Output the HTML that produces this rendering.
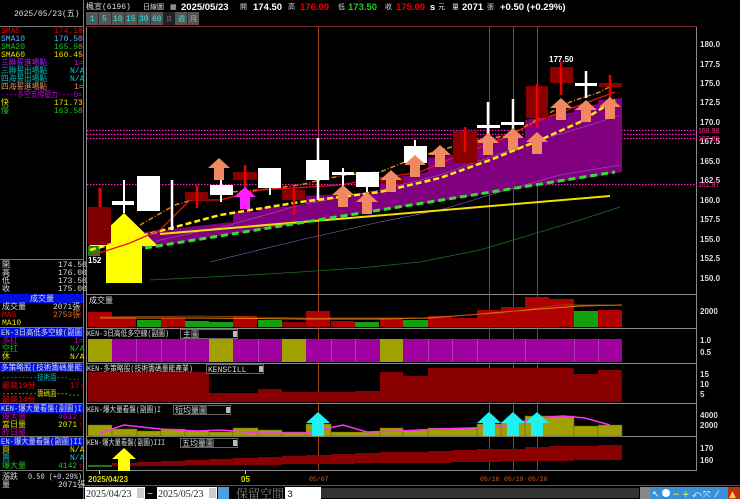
<!DOCTYPE html>
<html><head><meta charset="utf-8"><style>
html,body{margin:0;padding:0;background:#000;width:740px;height:499px;overflow:hidden}
svg{display:block}
</style></head><body>
<svg width="740" height="499" viewBox="0 0 740 499" xmlns="http://www.w3.org/2000/svg" font-family="Liberation Mono, WenQuanYi Zen Hei, monospace" font-size="8">
<rect width="740" height="499" fill="#000"/>
<!-- left panel -->
<line x1="83.5" y1="0" x2="83.5" y2="499" stroke="#777"/>
<line x1="0" y1="26.5" x2="83" y2="26.5" stroke="#777"/>
<text x="14" y="16" fill="#ddd" font-size="8">2025/05/23(五)</text>
<g font-size="8">
<text x="1" y="33" fill="#e00000">SMA5</text><text x="54" y="33" fill="#e00000">174.10</text><text x="78" y="33" fill="#e00">↑</text>
<text x="1" y="41" fill="#60b0ff">SMA10</text><text x="54" y="41" fill="#60b0ff">170.50</text><text x="78" y="41" fill="#e00">↑</text>
<text x="1" y="49" fill="#20c020">SMA20</text><text x="54" y="49" fill="#20c020">165.98</text><text x="78" y="49" fill="#e00">↑</text>
<text x="1" y="57" fill="#e0e000">SMA60</text><text x="54" y="57" fill="#e0e000">160.45</text><text x="78" y="57" fill="#e00">↑</text>
<text x="1" y="65" fill="#a020f0" textLength="46" lengthAdjust="spacingAndGlyphs">三聯誓進場點</text><text x="74" y="65" fill="#c0c">1=</text>
<text x="1" y="73" fill="#00c0c0" textLength="46" lengthAdjust="spacingAndGlyphs">三聯誓出場點</text><text x="70" y="73" fill="#0cc">N/A</text>
<text x="1" y="81" fill="#00c0c0" textLength="46" lengthAdjust="spacingAndGlyphs">四海誓出場點</text><text x="70" y="81" fill="#0cc">N/A</text>
<text x="1" y="89" fill="#e09060" textLength="46" lengthAdjust="spacingAndGlyphs">四海誓進場點</text><text x="74" y="89" fill="#e09060">1=</text>
<text x="1" y="97" fill="#c000e0" textLength="81" lengthAdjust="spacingAndGlyphs">----多空支撐壓力----0=</text>
<text x="1" y="105" fill="#e0e000">快</text><text x="54" y="105" fill="#e0e000">171.73</text><text x="78" y="105" fill="#e00">↑</text>
<text x="1" y="113" fill="#20c020">慢</text><text x="54" y="113" fill="#20c020">163.58</text><text x="78" y="113" fill="#e00">↑</text>
</g>
<line x1="0" y1="259.5" x2="83" y2="259.5" stroke="#777"/>
<g fill="#ddd">
<text x="2" y="267">開</text><text x="58" y="267">174.50</text>
<text x="2" y="275">高</text><text x="58" y="275">176.00</text>
<text x="2" y="283">低</text><text x="58" y="283">173.50</text>
<text x="2" y="291">收</text><text x="58" y="291">175.00</text>
</g>
<rect x="0" y="294" width="83" height="9" fill="#0010e0"/><text x="30" y="301" fill="#ddd">成交量</text>
<text x="2" y="309" fill="#ddd">成交量</text><text x="53" y="309" fill="#ddd">2071張</text><text x="78" y="309" fill="#e00">↑</text>
<text x="2" y="317" fill="#e00">MA5</text><text x="53" y="317" fill="#e07020">2753張</text><text x="78" y="317" fill="#e00">↑</text>
<text x="2" y="325" fill="#e0e000">MA10</text>
<line x1="0" y1="327.5" x2="83" y2="327.5" stroke="#777"/>
<rect x="0" y="328" width="83" height="9" fill="#0010e0"/><text x="1" y="335" fill="#ddd" textLength="81" lengthAdjust="spacingAndGlyphs">EN-3日高低多空線(副圖</text>
<text x="2" y="343" fill="#c000c0">多扛</text><text x="74" y="343" fill="#c0c">1=</text>
<text x="2" y="351" fill="#20c020">空扛</text><text x="70" y="351" fill="#20c020">N/A</text>
<text x="2" y="359" fill="#e0e000">休</text><text x="70" y="359" fill="#e0e000">N/A</text>
<line x1="0" y1="362.5" x2="83" y2="362.5" stroke="#777"/>
<rect x="0" y="363" width="83" height="9" fill="#0010e0"/><text x="1" y="370" fill="#ddd" textLength="81" lengthAdjust="spacingAndGlyphs">多策略股(技術籌碼量能</text>
<text x="2" y="380" fill="#00c0c0" textLength="78" lengthAdjust="spacingAndGlyphs">---------技術面---...</text>
<text x="2" y="388" fill="#e00">最高19分</text><text x="70" y="388" fill="#e00">17↑</text>
<text x="2" y="396" fill="#e0e000" textLength="78" lengthAdjust="spacingAndGlyphs">---------籌碼面---...</text>
<text x="2" y="402" fill="#e00">最高14分</text>
<line x1="0" y1="403.5" x2="83" y2="403.5" stroke="#777"/>
<rect x="0" y="404" width="83" height="9" fill="#0010e0"/><text x="1" y="411" fill="#ddd" textLength="81" lengthAdjust="spacingAndGlyphs">KEN-爆大量看盤(副圖)I</text>
<text x="2" y="419" fill="#c000c0">爆大量</text><text x="58" y="419" fill="#c000c0">4612</text><text x="78" y="419" fill="#e00">↑</text>
<text x="2" y="427" fill="#e0e000">當日量</text><text x="58" y="427" fill="#e0e000">2071</text><text x="78" y="427" fill="#e00">↑</text>
<text x="2" y="435" fill="#c000c0">昨日量</text>
<line x1="0" y1="436.5" x2="83" y2="436.5" stroke="#777"/>
<rect x="0" y="437" width="83" height="9" fill="#0010e0"/><text x="1" y="444" fill="#ddd" textLength="81" lengthAdjust="spacingAndGlyphs">EN-爆大量看盤(副圖)II</text>
<text x="2" y="452" fill="#e0e000">買</text><text x="70" y="452" fill="#e0e000">N/A</text>
<text x="2" y="460" fill="#00c0c0">賣</text><text x="70" y="460" fill="#0cc">N/A</text>
<text x="2" y="468" fill="#20c020">爆大量</text><text x="58" y="468" fill="#20c020">4142</text><text x="78" y="468" fill="#e00">↑</text>
<line x1="0" y1="470.5" x2="83" y2="470.5" stroke="#777"/>
<text x="2" y="479" fill="#ddd">漲跌</text><text x="28" y="479" fill="#ddd" textLength="54" lengthAdjust="spacingAndGlyphs">0.50 (+0.29%)</text>
<text x="2" y="487" fill="#ddd">量</text><text x="58" y="487" fill="#ddd">2071張</text>

<!-- header -->
<g font-family="Liberation Sans, WenQuanYi Zen Hei, sans-serif" font-size="9.5">
<text x="86" y="9" fill="#ddd" font-family="Liberation Mono, WenQuanYi Zen Hei, monospace" font-size="8">楓宣(6196)</text>
<text x="143" y="9" fill="#ddd" font-size="7">日線圖</text>
<text x="170" y="9" fill="#ddd" font-size="7">▦</text>
<text x="181" y="10" fill="#fff" font-weight="bold">2025/05/23</text>
<text x="240" y="9" fill="#ddd" font-size="7">開</text>
<text x="253" y="10" fill="#fff" font-weight="bold">174.50</text>
<text x="288" y="9" fill="#ddd" font-size="7">高</text>
<text x="300" y="10" fill="#e00" font-weight="bold">176.00</text>
<text x="338" y="9" fill="#ddd" font-size="7">低</text>
<text x="348" y="10" fill="#2c2" font-weight="bold">173.50</text>
<text x="385" y="9" fill="#ddd" font-size="7">收</text>
<text x="396" y="10" fill="#e00" font-weight="bold">175.00</text>
<text x="430" y="10" fill="#fff" font-weight="bold">s</text>
<text x="438" y="9" fill="#ddd" font-size="7">元</text>
<text x="452" y="9" fill="#ddd" font-size="7">量</text>
<text x="462" y="10" fill="#fff" font-weight="bold">2071</text>
<text x="487" y="9" fill="#ddd" font-size="7">張</text>
<text x="500" y="10" fill="#fff" font-weight="bold">+0.50 (+0.29%)</text>
</g>
<g font-size="8">
<rect x="86" y="12" width="113" height="13" fill="#555"/>
<rect x="163" y="12" width="12" height="13" fill="#222"/>
<g stroke="#333"><line x1="98.5" y1="12" x2="98.5" y2="25"/><line x1="111.5" y1="12" x2="111.5" y2="25"/><line x1="124.5" y1="12" x2="124.5" y2="25"/><line x1="137.5" y1="12" x2="137.5" y2="25"/><line x1="150.5" y1="12" x2="150.5" y2="25"/><line x1="187.5" y1="12" x2="187.5" y2="25"/></g>
<text x="90" y="21" fill="#2ee">1</text><text x="102" y="21" fill="#2ee">5</text><text x="113" y="21" fill="#2ee">10</text><text x="126" y="21" fill="#2ee">15</text><text x="139" y="21" fill="#2ee">30</text><text x="152" y="21" fill="#2ee">60</text>
<text x="166" y="21" fill="#777" font-size="6">日</text><text x="178" y="21" fill="#2ee" font-size="7">週</text><text x="190" y="21" fill="#2ee" font-size="7">月</text>
</g>

<!-- chart frame -->
<rect x="86.5" y="26.5" width="610" height="444" fill="none" stroke="#888"/>
<g stroke="#888"><line x1="86" y1="294.5" x2="697" y2="294.5"/><line x1="86" y1="328.5" x2="697" y2="328.5"/><line x1="86" y1="363.5" x2="697" y2="363.5"/><line x1="86" y1="403.5" x2="697" y2="403.5"/><line x1="86" y1="436.5" x2="697" y2="436.5"/></g>
<line x1="86" y1="26.5" x2="697" y2="26.5" stroke="#7a3030"/>

<!-- vertical date lines -->
<g stroke="#c05020" stroke-width="1" opacity="0.8"><line x1="318.5" y1="27" x2="318.5" y2="470"/><line x1="489.5" y1="27" x2="489.5" y2="470"/><line x1="513.5" y1="27" x2="513.5" y2="470"/><line x1="537.5" y1="27" x2="537.5" y2="470"/></g>

<!-- price axis -->
<g fill="#ddd" font-family="Liberation Sans, sans-serif" font-size="8" font-weight="bold">
<text x="700" y="47">180.0</text><text x="700" y="67">177.5</text><text x="700" y="86">175.0</text><text x="700" y="105">172.5</text><text x="700" y="125">170.0</text><text x="700" y="144">167.5</text><text x="700" y="164">165.0</text><text x="700" y="183">162.5</text><text x="700" y="203">160.0</text><text x="700" y="222">157.5</text><text x="700" y="242">155.0</text><text x="700" y="261">152.5</text><text x="700" y="281">150.0</text>
<text x="700" y="314">2000</text><text x="700" y="343">1.0</text><text x="700" y="355">0.5</text>
<text x="700" y="377">15</text><text x="700" y="387">10</text><text x="700" y="397">5</text>
<text x="700" y="418">4000</text><text x="700" y="428">2000</text>
<text x="700" y="451">170</text><text x="700" y="463">160</text>
</g>

<!-- pink dotted lines -->
<g stroke="#ff20c0" stroke-width="1.3" stroke-dasharray="1.5 1.5"><line x1="87" y1="130.5" x2="697" y2="130.5"/><line x1="87" y1="134.5" x2="697" y2="134.5"/><line x1="87" y1="138.5" x2="697" y2="138.5"/><line x1="87" y1="184.5" x2="697" y2="184.5"/></g>
<g fill="#ff3090" font-size="7" font-family="Liberation Sans, sans-serif"><text x="698" y="133">168.98</text><text x="698" y="141">167.89</text><text x="698" y="187">161.97</text></g>

<!-- purple area -->
<path d="M145,248 L145,232 L233,222 L233,212 L258,212 L258,208 L306,205 L306,196 L380,192 L380,180 L428,172 L428,158 L477,152 L477,140 L525,138 L525,120 L574,112 L574,108 L598,104 L598,100 L622,98 L622,172 L598,176 L145,248 Z" fill="#800080"/>
<g stroke="#a060c0" stroke-width="0.6" fill="none">
<polyline points="107,262 160,240 230,225 300,205 380,190 440,175 490,157 540,140 590,125 620,115"/>
<polyline points="210,262 300,240 380,222 440,210 500,192 560,175 620,165"/>
</g>
<polyline points="150,280 250,275 300,272 360,268 420,262 480,250 530,235 580,220 620,207" stroke="#1a7020" stroke-width="0.8" fill="none"/>
<!-- big yellow arrow -->
<path d="M124,213 L158,246 L142,246 L142,283 L106,283 L106,246 L89,246 Z" fill="#ffff00"/>
<rect x="88" y="207" width="23" height="38" fill="#800000"/>
<rect x="88" y="246" width="12" height="10" fill="#208020"/>
<text x="88" y="263" fill="#fff" font-size="8" font-family="Liberation Sans, sans-serif" font-weight="bold">152</text>
<line x1="100" y1="188" x2="100" y2="207" stroke="#e00" stroke-width="3"/>
<!-- lines -->
<line x1="160" y1="234" x2="610" y2="196" stroke="#f0e000" stroke-width="2"/>
<line x1="145" y1="248" x2="615" y2="172" stroke="#30e030" stroke-width="3" stroke-dasharray="7 4"/>
<polyline points="90,250 145,235 220,215 300,202 380,192 440,178 490,160 540,140 580,122 615,100" stroke="#ffee00" stroke-width="2.5" fill="none" stroke-dasharray="6 3"/>
<polyline points="140,225 175,205 215,193 260,190 300,185 320,180 345,175 380,172 410,160 440,150 480,140 510,135 540,118 570,102 600,92 615,84" stroke="#f08000" stroke-width="1.5" fill="none" stroke-dasharray="5 2 1 2"/>
<polyline points="93,255 130,243 160,230 190,200 220,200 260,190 310,187 340,185 380,178 420,172 460,155 500,140 540,120 580,105 615,92" stroke="#f01010" stroke-width="1.3" fill="none"/>

<!-- candles -->
<g>
<g fill="#fff" stroke="#fff">
<rect x="112" y="201" width="22" height="4" stroke="none"/><line x1="124" y1="180" x2="124" y2="213" stroke-width="2"/>
<rect x="137" y="176" width="23" height="35" stroke="none"/>
<line x1="172" y1="180" x2="172" y2="230" stroke-width="2.5"/>
<rect x="210" y="185" width="23" height="10" stroke="none"/><line x1="221" y1="180" x2="221" y2="202" stroke-width="2"/>
<rect x="258" y="168" width="23" height="20" stroke="none"/><line x1="270" y1="188" x2="270" y2="195" stroke-width="2"/>
<rect x="306" y="160" width="23" height="20" stroke="none"/><line x1="318" y1="138" x2="318" y2="200" stroke-width="2.5"/>
<rect x="332" y="172" width="22" height="3" stroke="none"/><line x1="343" y1="168" x2="343" y2="188" stroke-width="2"/>
<rect x="356" y="172" width="23" height="15" stroke="none"/><line x1="367" y1="187" x2="367" y2="192" stroke-width="2"/>
<rect x="404" y="146" width="23" height="17" stroke="none"/><line x1="415" y1="140" x2="415" y2="168" stroke-width="2"/>
<rect x="477" y="125" width="23" height="3" stroke="none"/><line x1="488" y1="102" x2="488" y2="136" stroke-width="2.5"/>
<rect x="501" y="122" width="23" height="3" stroke="none"/><line x1="513" y1="99" x2="513" y2="137" stroke-width="2.5"/>
<rect x="575" y="83" width="22" height="3" stroke="none"/><line x1="586" y1="71" x2="586" y2="98" stroke-width="2.5"/>
</g>
<g fill="#8a0000">
<rect x="185" y="192" width="23" height="8"/><rect x="233" y="172" width="24" height="8"/><rect x="282" y="190" width="23" height="10"/>
<rect x="380" y="178" width="23" height="6"/><rect x="453" y="131" width="24" height="32"/><rect x="526" y="86" width="22" height="32"/><rect x="550" y="67" width="23" height="16"/><rect x="599" y="83" width="23" height="4"/>
</g>
<g stroke="#e00" stroke-width="2.5">
<line x1="197" y1="185" x2="197" y2="208"/><line x1="245" y1="165" x2="245" y2="190"/><line x1="294" y1="186" x2="294" y2="215"/><line x1="465" y1="127" x2="465" y2="152"/><line x1="537" y1="84" x2="537" y2="128"/><line x1="561" y1="62" x2="561" y2="95"/><line x1="610" y1="75" x2="610" y2="100"/><line x1="391" y1="173" x2="391" y2="190"/>
</g>
<text x="549" y="62" fill="#fff" font-size="8" font-family="Liberation Sans, sans-serif" font-weight="bold">177.50</text>
</g>
<!-- salmon arrows -->
<g fill="#f08860">
<path d="M0,0 L11,10 L5,10 L5,22 L-5,22 L-5,10 L-11,10 Z" transform="translate(343,185)"/>
<path d="M0,0 L11,10 L5,10 L5,22 L-5,22 L-5,10 L-11,10 Z" transform="translate(219,158)"/>
<path d="M0,0 L11,10 L5,10 L5,22 L-5,22 L-5,10 L-11,10 Z" transform="translate(391,170)"/>
<path d="M0,0 L11,10 L5,10 L5,22 L-5,22 L-5,10 L-11,10 Z" transform="translate(415,155)"/>
<path d="M0,0 L11,10 L5,10 L5,22 L-5,22 L-5,10 L-11,10 Z" transform="translate(440,145)"/>
<path d="M0,0 L11,10 L5,10 L5,22 L-5,22 L-5,10 L-11,10 Z" transform="translate(488,133)"/>
<path d="M0,0 L11,10 L5,10 L5,22 L-5,22 L-5,10 L-11,10 Z" transform="translate(513,128)"/>
<path d="M0,0 L11,10 L5,10 L5,22 L-5,22 L-5,10 L-11,10 Z" transform="translate(537,132)"/>
<path d="M0,0 L11,10 L5,10 L5,22 L-5,22 L-5,10 L-11,10 Z" transform="translate(561,98)"/>
<path d="M0,0 L11,10 L5,10 L5,22 L-5,22 L-5,10 L-11,10 Z" transform="translate(586,100)"/>
<path d="M0,0 L11,10 L5,10 L5,22 L-5,22 L-5,10 L-11,10 Z" transform="translate(610,97)"/>
<path d="M0,0 L11,10 L5,10 L5,22 L-5,22 L-5,10 L-11,10 Z" transform="translate(367,192)"/>
</g>
<path d="M0,0 L11,10 L5,10 L5,22 L-5,22 L-5,10 L-11,10 Z" transform="translate(245,187)" fill="#ff20ff"/>

<!-- volume panel -->
<text x="89" y="303" fill="#ddd">成交量</text>
<g>
<rect x="88" y="312" width="24" height="15" fill="#b00000"/><rect x="112" y="317" width="24" height="10" fill="#b00000"/><rect x="137" y="320" width="24" height="7" fill="#10a010"/><rect x="161" y="318" width="24" height="9" fill="#b00000"/><rect x="185" y="321" width="24" height="6" fill="#10a010"/><rect x="209" y="322" width="24" height="5" fill="#10a010"/><rect x="233" y="316" width="24" height="11" fill="#b00000"/><rect x="258" y="320" width="24" height="7" fill="#10a010"/><rect x="282" y="322" width="24" height="5" fill="#900000"/><rect x="306" y="311" width="24" height="16" fill="#b00000"/><rect x="331" y="321" width="24" height="6" fill="#b00000"/><rect x="355" y="322" width="24" height="5" fill="#10a010"/><rect x="380" y="318" width="23" height="9" fill="#b00000"/><rect x="403" y="320" width="25" height="7" fill="#10a010"/><rect x="428" y="316" width="24" height="11" fill="#b00000"/><rect x="452" y="318" width="25" height="9" fill="#b00000"/><rect x="477" y="310" width="24" height="17" fill="#b00000"/><rect x="501" y="307" width="24" height="20" fill="#b00000"/><rect x="525" y="297" width="24" height="30" fill="#b00000"/><rect x="549" y="299" width="25" height="28" fill="#b00000"/><rect x="574" y="311" width="24" height="16" fill="#10a010"/><rect x="598" y="310" width="24" height="17" fill="#b00000"/>
<polyline points="100,318 200,318 300,319 380,319 430,318 480,314 540,309 580,306 622,305" stroke="#f08000" fill="none"/>
<polyline points="100,317 200,316 300,318 420,318 500,313 560,305 610,305" stroke="#a05020" fill="none" stroke-width="0.7"/>
</g>

<!-- panel 2 -->
<g>
<rect x="88" y="339" width="24" height="23" fill="#a0a000"/><rect x="112" y="339" width="97" height="23" fill="#a000a0"/><rect x="209" y="339" width="24" height="23" fill="#a0a000"/><rect x="233" y="339" width="49" height="23" fill="#a000a0"/><rect x="282" y="339" width="24" height="23" fill="#a0a000"/><rect x="306" y="339" width="74" height="23" fill="#a000a0"/><rect x="380" y="339" width="23" height="23" fill="#a0a000"/><rect x="403" y="339" width="219" height="23" fill="#a000a0"/>
<g stroke="#c070c0" stroke-width="0.5"><line x1="136.5" y1="339" x2="136.5" y2="362"/><line x1="161.5" y1="339" x2="161.5" y2="362"/><line x1="185.5" y1="339" x2="185.5" y2="362"/><line x1="258.5" y1="339" x2="258.5" y2="362"/><line x1="331.5" y1="339" x2="331.5" y2="362"/><line x1="355.5" y1="339" x2="355.5" y2="362"/><line x1="428.5" y1="339" x2="428.5" y2="362"/><line x1="452.5" y1="339" x2="452.5" y2="362"/><line x1="477.5" y1="339" x2="477.5" y2="362"/><line x1="525.5" y1="339" x2="525.5" y2="362"/><line x1="574.5" y1="339" x2="574.5" y2="362"/><line x1="598.5" y1="339" x2="598.5" y2="362"/></g>
</g>
<text x="87" y="336" fill="#ddd" textLength="82" lengthAdjust="spacingAndGlyphs">KEN-3日高低多空線(副圖)</text>
<rect x="180.5" y="329.5" width="57" height="9" fill="#000" stroke="#666"/><text x="183" y="337" fill="#ddd">主圖</text><rect x="233" y="331" width="4" height="6" fill="#bbb"/>

<!-- panel 3 -->
<g fill="#8a0000">
<rect x="88" y="372" width="121" height="30"/><rect x="209" y="393" width="24" height="9"/><rect x="233" y="393" width="25" height="9"/><rect x="258" y="389" width="24" height="13"/><rect x="282" y="392" width="73" height="10"/><rect x="355" y="391" width="25" height="11"/><rect x="380" y="372" width="23" height="30"/><rect x="403" y="376" width="25" height="26"/><rect x="428" y="368" width="146" height="34"/><rect x="574" y="374" width="24" height="28"/><rect x="598" y="370" width="24" height="32"/>
</g>
<text x="87" y="371" fill="#ddd" textLength="106" lengthAdjust="spacingAndGlyphs">KEN-多策略股(技術籌碼量能產業)</text>
<rect x="206.5" y="364.5" width="57" height="9" fill="#000" stroke="#666"/><text x="208" y="372" fill="#ddd">KENSCILL</text><rect x="259" y="366" width="4" height="6" fill="#bbb"/>

<!-- panel 4 -->
<g fill="#a0a000" stroke="#606000" stroke-width="0.5">
<rect x="88" y="425" width="24" height="11"/><rect x="112" y="429" width="25" height="7"/><rect x="137" y="431" width="24" height="5"/><rect x="161" y="429" width="24" height="7"/><rect x="185" y="431" width="24" height="5"/><rect x="209" y="432" width="24" height="4"/><rect x="233" y="428" width="25" height="8"/><rect x="258" y="430" width="24" height="6"/><rect x="282" y="432" width="24" height="4"/><rect x="306" y="424" width="25" height="12"/><rect x="331" y="432" width="49" height="4"/><rect x="380" y="428" width="23" height="8"/><rect x="403" y="430" width="25" height="6"/><rect x="428" y="428" width="49" height="8"/><rect x="477" y="424" width="24" height="12"/><rect x="501" y="422" width="24" height="14"/><rect x="525" y="416" width="49" height="20"/><rect x="574" y="426" width="24" height="10"/><rect x="598" y="425" width="24" height="11"/>
</g>
<polyline points="100,433 124,425 160,429 197,431 221,430 258,433 306,433 343,425 367,432 400,431 440,429 470,428 500,427 537,418 563,416 585,418 610,425" stroke="#ff30ff" stroke-width="1.5" fill="none"/>
<g fill="#20f0f0">
<path d="M0,0 L12,11 L6,11 L6,24 L-6,24 L-6,11 L-12,11 Z" transform="translate(318,412)"/>
<path d="M0,0 L12,11 L6,11 L6,24 L-6,24 L-6,11 L-12,11 Z" transform="translate(489,412)"/>
<path d="M0,0 L12,11 L6,11 L6,24 L-6,24 L-6,11 L-12,11 Z" transform="translate(513,412)"/>
<path d="M0,0 L12,11 L6,11 L6,24 L-6,24 L-6,11 L-12,11 Z" transform="translate(537,412)"/>
</g>
<text x="87" y="412" fill="#ddd" textLength="74" lengthAdjust="spacingAndGlyphs">KEN-爆大量看盤(副圖)I</text>
<rect x="173.5" y="405.5" width="57" height="9" fill="#000" stroke="#666"/><text x="175" y="413" fill="#ddd">短均量圖</text><rect x="226" y="407" width="4" height="6" fill="#bbb"/>

<!-- panel 5 -->
<line x1="88" y1="466" x2="112" y2="466" stroke="#20a020" stroke-width="1.5"/>
<g fill="#8a0000">
<rect x="112" y="463" width="25" height="3"/><rect x="137" y="462" width="24" height="4"/><rect x="161" y="461" width="24" height="5"/><rect x="185" y="460" width="24" height="5"/><rect x="209" y="459" width="24" height="6"/><rect x="233" y="458" width="25" height="7"/><rect x="258" y="457" width="24" height="8"/><rect x="282" y="456" width="24" height="8"/><rect x="306" y="455" width="25" height="9"/><rect x="331" y="454" width="24" height="10"/><rect x="355" y="453" width="25" height="10"/><rect x="380" y="452" width="23" height="11"/><rect x="403" y="452" width="25" height="11"/><rect x="428" y="451" width="24" height="12"/><rect x="452" y="450" width="25" height="12"/><rect x="477" y="449" width="24" height="13"/><rect x="501" y="449" width="24" height="12"/><rect x="525" y="447" width="24" height="14"/><rect x="549" y="446" width="25" height="15"/><rect x="574" y="446" width="24" height="14"/><rect x="598" y="445" width="24" height="15"/>
</g>
<path d="M124,448 L136,459 L130,459 L130,471 L118,471 L118,459 L112,459 Z" fill="#ffff00"/>
<text x="87" y="445" fill="#ddd" textLength="78" lengthAdjust="spacingAndGlyphs">KEN-爆大量看盤(副圖)III</text>
<rect x="180.5" y="438.5" width="57" height="9" fill="#000" stroke="#666"/><text x="182" y="446" fill="#ddd">五均量圖</text><rect x="233" y="440" width="4" height="6" fill="#bbb"/>

<!-- date axis -->
<g stroke="#ccc"><line x1="99.5" y1="471" x2="99.5" y2="474"/><line x1="245.5" y1="471" x2="245.5" y2="474"/></g>
<g font-family="Liberation Sans, sans-serif" font-size="8" font-weight="bold">
<text x="88" y="482" fill="#e0e000">2025/04/23</text><text x="241" y="482" fill="#e0e000">05</text>
</g>
<g font-family="Liberation Mono, monospace" font-size="6.5" fill="#d06020">
<text x="309" y="481">05/07</text><text x="480" y="481">05/16</text><text x="504" y="481">05/19</text><text x="528" y="481">05/20</text>
</g>

<!-- bottom bar -->
<line x1="84" y1="485.5" x2="740" y2="485.5" stroke="#555"/>
<rect x="85" y="487" width="60" height="12" fill="#fff"/><text x="86" y="497" fill="#222" font-family="Liberation Serif, serif" font-size="10">2025/04/23</text><rect x="137" y="488" width="7" height="10" fill="#ccc"/>
<text x="147" y="497" fill="#ddd" font-size="10">~</text>
<rect x="157" y="487" width="60" height="12" fill="#fff"/><text x="158" y="497" fill="#222" font-family="Liberation Serif, serif" font-size="10">2025/05/23</text><rect x="209" y="488" width="7" height="10" fill="#ccc"/>
<rect x="218" y="487" width="11" height="12" fill="#4aa0e0"/>
<text x="236" y="498" fill="#888" font-size="12" font-family="Liberation Serif, Noto Serif CJK SC, serif">保留空間</text>
<rect x="285" y="487" width="36" height="12" fill="#fff"/><text x="287" y="497" fill="#222" font-size="10">3</text>
<rect x="321" y="488" width="318" height="10" fill="#333"/>
<rect x="640" y="487" width="10" height="12" fill="#888"/>
<rect x="650" y="487" width="78" height="12" fill="#3a90d8"/>
<rect x="728" y="487" width="12" height="12" fill="#c03010"/>
<g fill="#fff" font-size="9" font-family="DejaVu Sans, sans-serif"><text x="652" y="497">↖</text><circle cx="666" cy="493" r="4" fill="#fff"/><text x="672" y="497" fill="#ff0">−</text><text x="682" y="497" fill="#ff0">+</text><text x="692" y="497">⤺</text><text x="703" y="497">⤧</text><text x="716" y="497">⁄</text><text x="729" y="497" fill="#ffd040">▲</text></g>
</svg>
</body></html>
